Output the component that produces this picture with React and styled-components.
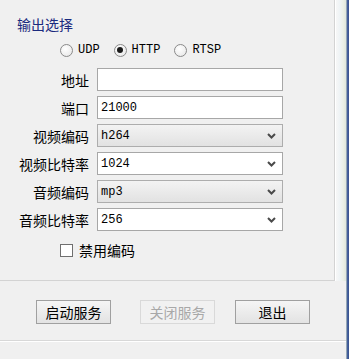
import React from "react"
import styled, { createGlobalStyle } from "styled-components"

const GlobalStyle = createGlobalStyle`
  html, body {
    margin: 0;
    padding: 0;
    background: #f0f0f0;
  }
  body {
    font-family: "Noto Sans CJK SC", "Liberation Sans", sans-serif;
  }
`

const cjk = `"Noto Sans CJK SC", sans-serif`
const mono = `"Liberation Mono", "Noto Sans CJK SC", monospace`

const Window = styled.div`
  width: 349px;
  height: 359px;
  display: flex;
  background: #f0f0f0;
  overflow: hidden;
`

const Content = styled.div`
  width: 346px;
  display: flex;
  flex-direction: column;
`

const Frame = styled.div`
  width: 3px;
  background: linear-gradient(to right, #c9d6c6, #4a64a0 40%, #34508c);
`

const TopArea = styled.div`
  display: flex;
  height: 281px;
`

const GroupBox = styled.div`
  width: 334px;
  height: 280px;
  border-right: 1px solid #d3d3d3;
  border-bottom: 1px solid #d3d3d3;
  display: flex;
  flex-direction: column;
`

const SideStrip = styled.div`
  flex: 1;
  border-left: 1px solid #ffffff;
  background: linear-gradient(to right, #f7f7f7, #eef3f5 40%, #e9efe6 75%, #dfe6dc);
`

const Title = styled.div`
  font-family: ${cjk};
  font-size: 14px;
  line-height: 18px;
  color: #1b2a7e;
  padding: 15px 0 0 17px;
  height: 18px;
`

const RadioRow = styled.div`
  display: flex;
  align-items: center;
  gap: 14px;
  padding-left: 60px;
  margin-top: 9px;
  height: 16px;
`

const RadioItem = styled.label`
  display: flex;
  align-items: center;
  gap: 5px;
  font-family: ${mono};
  font-size: 12px;
  color: #000;
`

const RadioCircle = styled.span`
  width: 11px;
  height: 11px;
  border-radius: 50%;
  border: 1px solid #8a8a8a;
  background: radial-gradient(circle at 40% 35%, #ffffff, #e4e4e4);
  display: flex;
  align-items: center;
  justify-content: center;

  &::after {
    content: "";
    width: 6px;
    height: 6px;
    border-radius: 50%;
    background: ${p => (p.$checked ? "#1a1a1a" : "transparent")};
  }
`

const Form = styled.div`
  display: flex;
  flex-direction: column;
  gap: 5px;
  margin-top: 10px;
`

const Row = styled.div`
  display: grid;
  grid-template-columns: 89px 186px;
  column-gap: 8px;
  align-items: center;
  height: 23px;
`

const Label = styled.span`
  font-family: ${cjk};
  font-size: 14px;
  text-align: right;
  color: #000;
  white-space: nowrap;
`

const Field = styled.div`
  height: 23px;
  box-sizing: border-box;
  border: 1px solid ${p => (p.$combo ? "#adadad" : "#a7a7a7")};
  background: ${p =>
    p.$combo ? "linear-gradient(to bottom, #f3f3f3, #e2e2e2)" : "#ffffff"};
  display: flex;
  align-items: center;
  padding: 0 6px 0 3px;
  font-family: ${mono};
  font-size: 12px;
  color: #000;
`

const Value = styled.span`
  flex: 1;
`

const Arrow = () => (
  <svg width="9" height="6" viewBox="0 0 9 6">
    <path d="M1 1 L4.5 4.5 L8 1" fill="none" stroke="#4a4a4a" strokeWidth="2" />
  </svg>
)

const CheckRow = styled.label`
  display: flex;
  align-items: center;
  gap: 6px;
  padding-left: 60px;
  margin-top: 9px;
  font-family: ${cjk};
  font-size: 14px;
  color: #000;
`

const CheckBox = styled.span`
  width: 11px;
  height: 11px;
  border: 1px solid #6f6f6f;
  background: #fff;
`

const ButtonBar = styled.div`
  height: 60px;
  display: flex;
  align-items: flex-start;
  padding: 19px 0 0 36px;
  box-sizing: border-box;
  border-bottom: 1px solid #d8d8d8;
`

const Button = styled.button`
  width: 75px;
  height: 24px;
  margin-right: ${p => p.$gap || 0}px;
  font-family: ${cjk};
  font-size: 14px;
  line-height: 20px;
  padding: 0;
  color: ${p => (p.disabled ? "#a8a8a8" : "#000")};
  border: 1px solid ${p => (p.disabled ? "#d9d9d9" : "#a0a0a0")};
  background: ${p =>
    p.disabled ? "#f1f1f1" : "linear-gradient(to bottom, #f5f5f5, #e3e3e3)"};
  border-radius: 0;
`

const BottomRest = styled.div`
  flex: 1;
  border-top: 1px solid #ffffff;
`

const fields = [
  { label: "地址", value: "" },
  { label: "端口", value: "21000" },
  { label: "视频编码", value: "h264", combo: true, arrow: true },
  { label: "视频比特率", value: "1024", arrow: true },
  { label: "音频编码", value: "mp3", combo: true, arrow: true },
  { label: "音频比特率", value: "256", arrow: true },
]

export default function App() {
  return (
    <>
      <GlobalStyle />
      <Window>
        <Content>
          <TopArea>
            <GroupBox>
              <Title>输出选择</Title>
              <RadioRow>
                <RadioItem>
                  <RadioCircle />
                  UDP
                </RadioItem>
                <RadioItem>
                  <RadioCircle $checked />
                  HTTP
                </RadioItem>
                <RadioItem>
                  <RadioCircle />
                  RTSP
                </RadioItem>
              </RadioRow>
              <Form>
                {fields.map(f => (
                  <Row key={f.label}>
                    <Label>{f.label}</Label>
                    <Field $combo={f.combo}>
                      <Value>{f.value}</Value>
                      {f.arrow && <Arrow />}
                    </Field>
                  </Row>
                ))}
              </Form>
              <CheckRow>
                <CheckBox />
                禁用编码
              </CheckRow>
            </GroupBox>
            <SideStrip />
          </TopArea>
          <ButtonBar>
            <Button $gap={29}>启动服务</Button>
            <Button $gap={20} disabled>
              关闭服务
            </Button>
            <Button>退出</Button>
          </ButtonBar>
          <BottomRest />
        </Content>
        <Frame />
      </Window>
    </>
  )
}
